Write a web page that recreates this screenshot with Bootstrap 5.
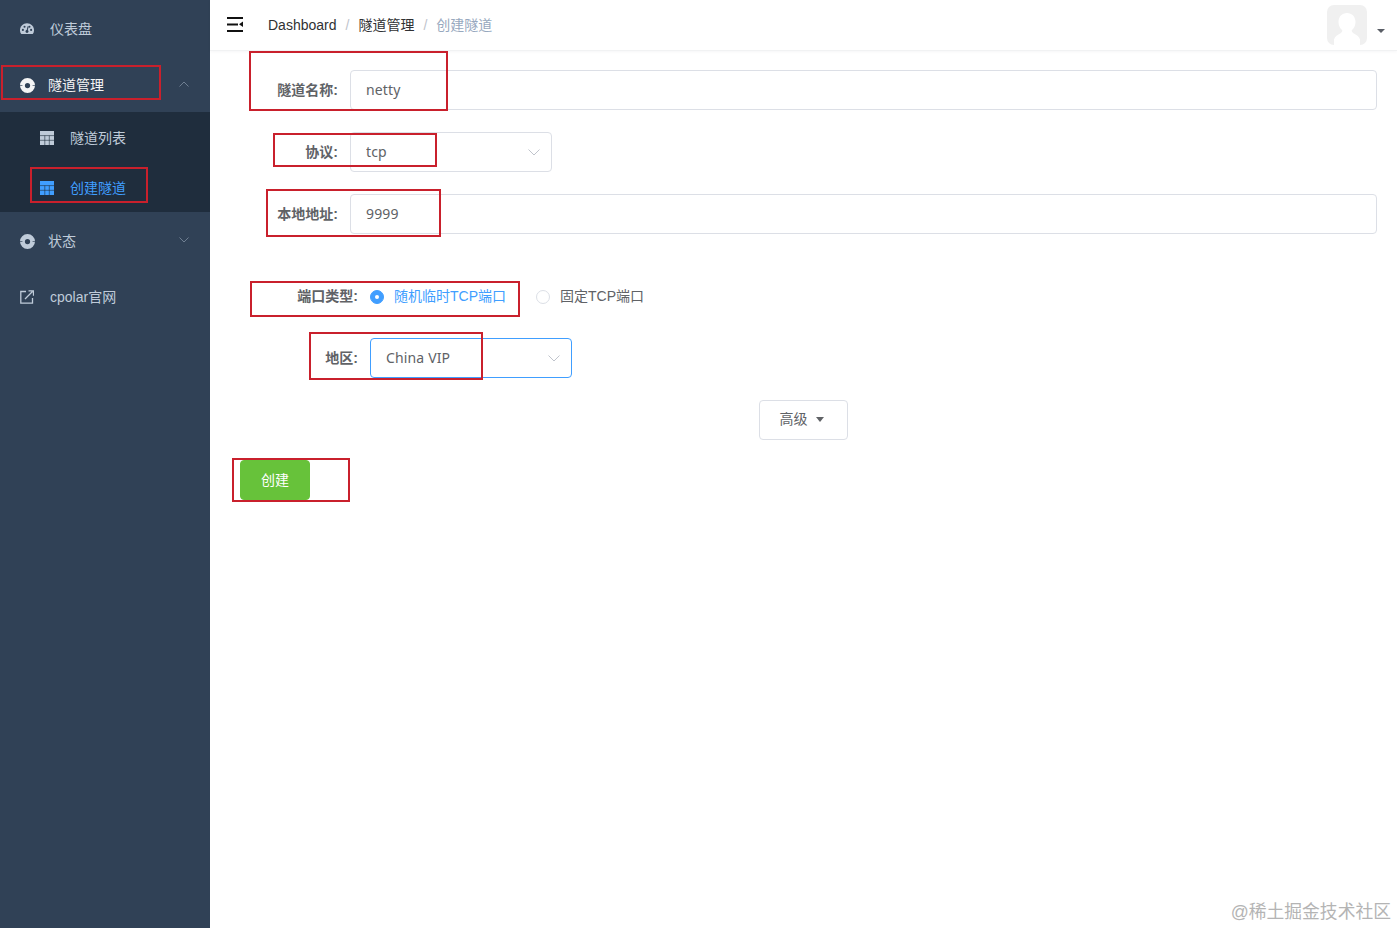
<!DOCTYPE html>
<html lang="zh">
<head>
<meta charset="utf-8">
<title>创建隧道</title>
<link href="https://cdn.jsdelivr.net/npm/bootstrap@5.3.0/dist/css/bootstrap.min.css" rel="stylesheet">
<style>
html,body{height:100%;overflow:hidden}
body{font-family:"Liberation Sans","Noto Sans CJK SC",sans-serif;font-size:14px;color:#606266;background:#fff}
.shell{height:928px;position:relative}
.side{width:210px;background:#304156;flex:none}
.side-item{height:56px;color:#bfcbd9;padding:2px 0 0 20px}
.side-item .ico{width:15px;height:15px;flex:none;margin-right:13px}
.side-item .ico-gap{width:14px;height:14px;margin-right:16px}
.side-on{color:#f4f4f5}
.side-sub{background:#1f2d3d}
.sub-item{height:50px;padding:2px 0 0 40px;color:#bfcbd9}
.sub-item svg{width:14px;height:14px;margin-right:16px;flex:none}
.sub-on{color:#409eff}
.side-chev{width:10px;height:6px;margin-left:auto;margin-right:21px;margin-top:-3px}
.topbar{height:51px;border-bottom:1px solid #f1f2f3;padding-left:17px;box-shadow:0 1px 3px rgba(0,21,41,.04)}
.burger{width:17px;height:15px;margin-right:24px;margin-top:-2px}
.crumbs{--bs-breadcrumb-margin-bottom:0;--bs-breadcrumb-divider-color:#c0c4cc;--bs-breadcrumb-item-padding-x:9px;font-size:14px;color:#303133}
.crumbs .breadcrumb-item{color:#303133}
.crumbs .breadcrumb-item.active{color:#97a8be}
.acct{margin-left:auto;margin-right:12px}
.avatar{width:40px;height:40px;margin-top:-1px}
.caret-d{width:0;height:0;border-left:4px solid transparent;border-right:4px solid transparent;border-top:4px solid #5a5e66;margin-left:10px;margin-top:23px}
.pane{padding:19px 20px 0 40px}
.fld{margin-bottom:22px;min-height:40px}
.lab{width:100px;padding-right:12px;text-align:right;font-weight:700;flex:none;margin:0;color:#606266}
.lab-w{width:120px}
.inp{height:40px;border:1px solid #dcdfe6;border-radius:4px;color:#606266;padding:0 15px 2px;font-size:14px;box-shadow:none;font-family:"Noto Sans","Noto Sans CJK SC",sans-serif;letter-spacing:.15px}
.inp:focus{border-color:#dcdfe6;box-shadow:none;color:#606266}
.sel{width:202px;position:relative;flex:none}
.sel-on .inp,.sel-on .inp:focus{border-color:#409eff}
.sel svg{position:absolute;right:12px;top:17px;width:12px;height:7px}
.gap-rad{margin-bottom:22px;margin-top:42px}
.rad{width:14px;height:14px;border-radius:50%;border:1px solid #dcdfe6;background:#fff;margin-right:10px;flex:none;margin-top:1px}
.rad-on{border-color:#409eff;background:#409eff;display:flex;align-items:center;justify-content:center}
.rad-on i{display:block;width:4px;height:4px;border-radius:50%;background:#fff}
.rad-txt{color:#606266}
.rad-txt-on{color:#409eff}
.rad-wrap2{margin-left:30px}
.adv-row{padding-left:509px;margin-bottom:20px}
.adv{width:89px;height:40px;border:1px solid #dcdfe6;border-radius:4px;color:#606266;font-size:14px;background:#fff;padding:0 4px 2px 0}
.adv:hover{border-color:#dcdfe6;background:#fff;color:#606266}
.adv .caret-a{width:0;height:0;border-left:4px solid transparent;border-right:4px solid transparent;border-top:5px solid #606266;margin-left:8px;display:inline-block;vertical-align:2px}
.mk{width:70px;height:40px;background:#67c23a;border:1px solid #67c23a;border-radius:4px;color:#fff;font-size:14px;padding:0;margin-left:-10px}
.mk:hover{background:#67c23a;border-color:#67c23a;color:#fff}
.rb{position:absolute;border:2px solid #c9202c;pointer-events:none}
.rb1{left:1px;top:65px;width:160px;height:35px}
.rb2{left:30px;top:167px;width:118px;height:36px}
.rb3{left:249px;top:51px;width:199px;height:60px}
.rb4{left:273px;top:133px;width:164px;height:34px}
.rb5{left:266px;top:189px;width:175px;height:48px}
.rb6{left:250px;top:281px;width:270px;height:36px}
.rb7{left:309px;top:332px;width:174px;height:48px}
.rb8{left:232px;top:458px;width:118px;height:44px}
.wm{position:absolute;right:6px;bottom:4px;font-size:17.8px;color:#b4b4b4;line-height:24px}
</style>
</head>
<body>
<div class="shell d-flex">
  <aside class="side">
    <div class="side-item d-flex align-items-center">
      <svg class="ico ico-gap" viewBox="0 0 16 14"><path fill="#bfcbd9" d="M8 .5C3.600 .5 0 4 0 8.300c0 1.700.6 3.300 1.500 4.500h13c.9-1.200 1.500-2.800 1.500-4.500C16 4 12.400.5 8 .5z"/><circle cx="3.300" cy="8" r="1.200" fill="#304156"/><circle cx="5.200" cy="4.400" r="1.200" fill="#304156"/><circle cx="10.800" cy="4.400" r="1.200" fill="#304156"/><circle cx="12.700" cy="8" r="1.200" fill="#304156"/><circle cx="8" cy="9.800" r="1.700" fill="#304156"/><path d="M8 9.500 9.300 4" stroke="#304156" stroke-width="1.200"/></svg>
      <span>仪表盘</span>
    </div>
    <div class="side-item side-on d-flex align-items-center">
      <svg class="ico" viewBox="0 0 16 16"><circle cx="8" cy="8" r="5.400" fill="none" stroke="#f4f4f5" stroke-width="5.200"/><path d="M0 8h2.600M13.400 8H16" stroke="#304156" stroke-width=".7"/></svg>
      <span>隧道管理</span>
      <svg class="side-chev" viewBox="0 0 10 6"><path d="M.5 5.500 5 1l4.500 4.500" fill="none" stroke="#6f7f92" stroke-width="1"/></svg>
    </div>
    <div class="side-sub">
      <div class="sub-item d-flex align-items-center">
        <svg viewBox="0 0 14 14"><path fill="#bfcbd9" d="M0 0h14v14H0z"/><path stroke="#1f2d3d" stroke-width=".6" fill="none" d="M0 4.600h14M0 9.300h14M4.800 4.600V14M9.300 4.600V14"/></svg>
        <span>隧道列表</span>
      </div>
      <div class="sub-item sub-on d-flex align-items-center">
        <svg viewBox="0 0 14 14"><path fill="#409eff" d="M0 0h14v14H0z"/><path stroke="#1f2d3d" stroke-width=".6" fill="none" d="M0 4.600h14M0 9.300h14M4.800 4.600V14M9.300 4.600V14"/></svg>
        <span>创建隧道</span>
      </div>
    </div>
    <div class="side-item d-flex align-items-center">
      <svg class="ico" viewBox="0 0 16 16"><circle cx="8" cy="8" r="5.400" fill="none" stroke="#bfcbd9" stroke-width="5.200"/><path d="M0 8h2.600M13.400 8H16" stroke="#304156" stroke-width=".7"/></svg>
      <span>状态</span>
      <svg class="side-chev" viewBox="0 0 10 6"><path d="M.5.500 5 5l4.500-4.500" fill="none" stroke="#6f7f92" stroke-width="1"/></svg>
    </div>
    <div class="side-item d-flex align-items-center">
      <svg class="ico ico-gap" viewBox="0 0 14 14"><path d="M6 1.500H.8v11.700h11.700V8" fill="none" stroke="#bfcbd9" stroke-width="1.300"/><path d="M5 9 12.500 1.500M8.500 .8h5v5" fill="none" stroke="#bfcbd9" stroke-width="1.300"/></svg>
      <span>cpolar官网</span>
    </div>
  </aside>
  <main class="flex-grow-1">
    <header class="topbar d-flex align-items-center">
      <svg class="burger" viewBox="0 0 17 15"><path fill="#111" d="M0 0h16v2H0zM0 6.500h11v2H0zM0 13h16v2H0z"/><path fill="#111" d="M16 4.500v5.500l-4-2.700z"/></svg>
      <ol class="breadcrumb crumbs">
        <li class="breadcrumb-item">Dashboard</li>
        <li class="breadcrumb-item">隧道管理</li>
        <li class="breadcrumb-item active">创建隧道</li>
      </ol>
      <div class="acct d-flex">
        <svg class="avatar" viewBox="0 0 40 40"><rect width="40" height="40" rx="7" fill="#f0f0f0"/><path fill="#fff" d="M20 8c-5 0-8.500 3.800-8.500 9 0 3.500 1.500 6.500 3.800 8.300 0 1.700-1 2.700-3 3.700-2.300 1.100-4.300 2.500-5.300 5.500V40h26v-5.500c-1-3-3-4.400-5.300-5.500-2-1-3-2-3-3.700 2.300-1.800 3.800-4.800 3.800-8.300 0-5.200-3.500-9-8.500-9z"/></svg>
        <span class="caret-d"></span>
      </div>
    </header>
    <form class="pane">
      <div class="fld d-flex align-items-center">
        <label class="lab">隧道名称:</label>
        <input class="form-control inp" value="netty">
      </div>
      <div class="fld d-flex align-items-center">
        <label class="lab">协议:</label>
        <div class="sel">
          <input class="form-control inp" value="tcp">
          <svg viewBox="0 0 12 7"><path d="M.5.500 6 6l5.500-5.500" fill="none" stroke="#c0c4cc" stroke-width="1"/></svg>
        </div>
      </div>
      <div class="fld d-flex align-items-center">
        <label class="lab">本地地址:</label>
        <input class="form-control inp" value="9999">
      </div>
      <div class="fld gap-rad d-flex align-items-center">
        <label class="lab lab-w">端口类型:</label>
        <div class="d-flex align-items-center">
          <span class="rad rad-on"><i></i></span><span class="rad-txt-on">随机临时TCP端口</span>
        </div>
        <div class="d-flex align-items-center rad-wrap2">
          <span class="rad"></span><span class="rad-txt">固定TCP端口</span>
        </div>
      </div>
      <div class="fld d-flex align-items-center">
        <label class="lab lab-w">地区:</label>
        <div class="sel sel-on">
          <input class="form-control inp" value="China VIP">
          <svg viewBox="0 0 12 7"><path d="M.5.500 6 6l5.500-5.500" fill="none" stroke="#c0c4cc" stroke-width="1"/></svg>
        </div>
      </div>
      <div class="adv-row">
        <button type="button" class="btn adv">高级<span class="caret-a"></span></button>
      </div>
      <div>
        <button type="button" class="btn mk">创建</button>
      </div>
    </form>
  </main>
  <div class="rb rb1"></div><div class="rb rb2"></div><div class="rb rb3"></div><div class="rb rb4"></div>
  <div class="rb rb5"></div><div class="rb rb6"></div><div class="rb rb7"></div><div class="rb rb8"></div>
  <div class="wm">@稀土掘金技术社区</div>
</div>
<script src="https://cdn.jsdelivr.net/npm/bootstrap@5.3.0/dist/js/bootstrap.bundle.min.js"></script>
</body>
</html>
